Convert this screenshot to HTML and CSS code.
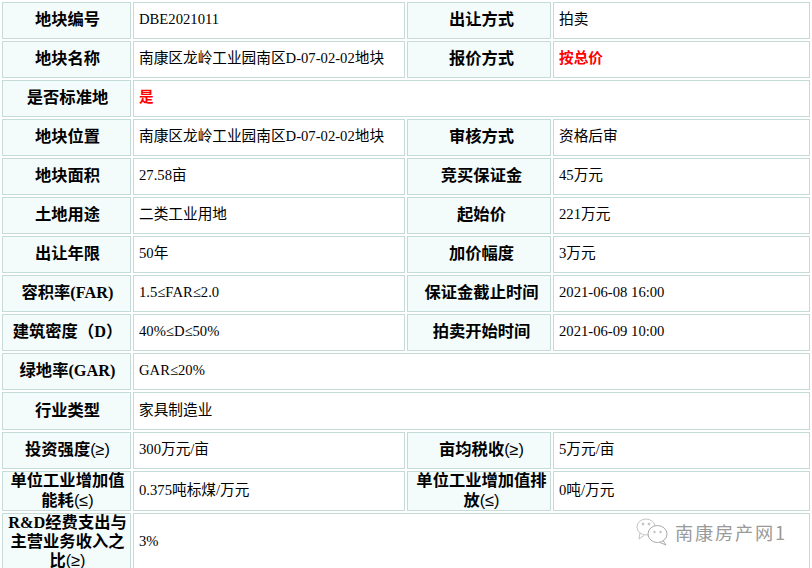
FILE: index.html
```html
<!DOCTYPE html>
<html lang="zh-CN">
<head>
<meta charset="utf-8">
<title>地块信息</title>
<link rel="stylesheet" href="styles.css">
</head>
<body>
<main class="page">
<table class="info">
<colgroup><col class="c1"><col class="c2"><col class="c3"><col class="c4"></colgroup>
<tr><th>地块编号</th><td>DBE2021011</td><th class="right">出让方式</th><td>拍卖</td></tr>
<tr><th>地块名称</th><td>南康区龙岭工业园南区D-07-02-02地块</td><th class="right">报价方式</th><td><strong class="red">按总价</strong></td></tr>
<tr><th>是否标准地</th><td colspan="3"><strong class="red">是</strong></td></tr>
<tr><th>地块位置</th><td>南康区龙岭工业园南区D-07-02-02地块</td><th class="right">审核方式</th><td>资格后审</td></tr>
<tr><th>地块面积</th><td>27.58亩</td><th class="right">竞买保证金</th><td>45万元</td></tr>
<tr><th>土地用途</th><td>二类工业用地</td><th class="right">起始价</th><td>221万元</td></tr>
<tr><th>出让年限</th><td>50年</td><th class="right">加价幅度</th><td>3万元</td></tr>
<tr><th>容积率(FAR)</th><td>1.5≤FAR≤2.0</td><th class="right">保证金截止时间</th><td>2021-06-08 16:00</td></tr>
<tr><th>建筑密度（D）</th><td>40%≤D≤50%</td><th class="right">拍卖开始时间</th><td>2021-06-09 10:00</td></tr>
<tr><th>绿地率(GAR)</th><td colspan="3">GAR≤20%</td></tr>
<tr class="tall"><th>行业类型</th><td colspan="3">家具制造业</td></tr>
<tr><th>投资强度<span class="sym">(≥)</span></th><td>300万元/亩</td><th class="right">亩均税收<span class="sym">(≥)</span></th><td>5万元/亩</td></tr>
<tr><th class="wrap">单位工业增加值能耗<span class="sym">(≤)</span></th><td>0.375吨标煤/万元</td><th class="right wrap">单位工业增加值排放<span class="sym">(≤)</span></th><td>0吨/万元</td></tr>
<tr><th class="wrap">R&amp;D经费支出与主营业务收入之比<span class="sym">(≥)</span></th><td colspan="3">3%</td></tr>
</table>
<div class="mark">
<svg class="wechat" width="32" height="28" viewBox="0 0 32 28" fill="none" stroke="#c4c4c4" stroke-width="1">
<ellipse cx="10" cy="9" rx="9" ry="8"/>
<path d="M4 15l-1 6 5-3.500"/>
<ellipse cx="21.500" cy="16" rx="9.500" ry="8.500" fill="#fff" stroke="#aaa"/>
<path d="M27 22.500l3 4.500-6-2.500" stroke="#aaa"/>
<circle cx="7" cy="6" r="1" fill="#c4c4c4"/>
<circle cx="13" cy="6" r="1" fill="#c4c4c4"/>
<circle cx="18.500" cy="14" r="0.800" fill="#aaa"/>
<circle cx="24.500" cy="14" r="0.800" fill="#aaa"/>
</svg>
<span>南康房产网1</span>
</div>
</main>
</body>
</html>
```
FILE: styles.css
```css
html, body {
  margin: 0;
  padding: 0;
  background: #fff;
}
.page {
  position: relative;
  width: 812px;
  height: 568px;
  overflow: hidden;
}
.info {
  width: 812px;
  table-layout: fixed;
  border-collapse: separate;
  border-spacing: 2px;
  font-family: "Liberation Serif", "Noto Sans CJK SC", serif;
  font-size: 14.67px;
  color: #000;
}
.c1 { width: 129px; }
.c2 { width: 272px; }
.c3 { width: 144px; }
.c4 { width: 257px; }
.info tr { height: 37px; }
.info tr.tall { height: 38px; }
.info th, .info td {
  border: 1px solid #c4dbd8;
  box-sizing: border-box;
  vertical-align: middle;
  line-height: 19px;
}
.info th {
  background: #f4fbfb;
  font-size: 16.3px;
  font-weight: 700;
  text-align: center;
  padding: 0 0 2px 2px;
}
.info th.right {
  padding-left: 5px;
}
.info th.wrap {
  padding-bottom: 0;
  line-height: 18.5px;
}
.info td {
  padding: 0 0 2px 5px;
  background: #fff;
}
.sym {
  font-family: "Liberation Sans", sans-serif;
  font-weight: 400;
}
.red {
  color: #f00;
  font-size: 14.67px;
  font-weight: 700;
}
.mark {
  position: absolute;
  left: 636px;
  top: 518px;
  display: flex;
  align-items: center;
  gap: 7px;
  font-family: "Noto Sans CJK SC", sans-serif;
  font-size: 18.200px;
  letter-spacing: 1.8px;
  color: #9a9a9a;
  line-height: 28px;
}
```
